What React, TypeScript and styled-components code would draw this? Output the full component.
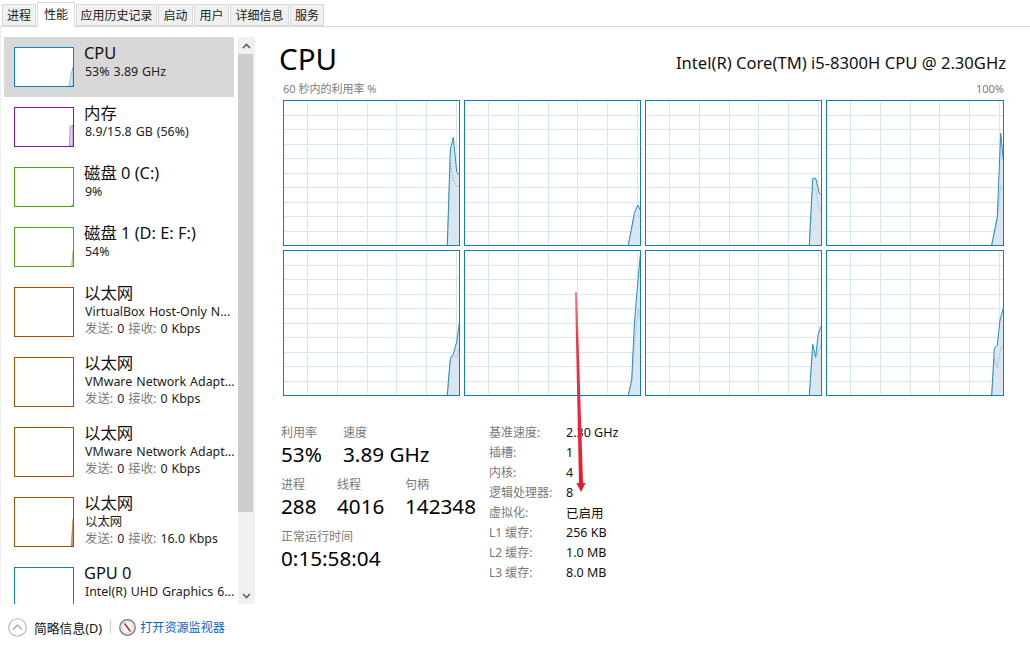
import { Fragment } from "react";
import styled, { createGlobalStyle } from "styled-components";

const GlobalStyle = createGlobalStyle`
  html, body {
    margin: 0;
    padding: 0;
    background: #fff;
    overflow: hidden;
  }
  body {
    font-family: "Noto Sans", "Noto Sans CJK SC", sans-serif;
    color: #000;
  }
`;

const Page = styled.div`
  width: 1030px;
  height: 652px;
  position: relative;
  display: flex;
  flex-direction: column;
  overflow: hidden;
`;

const TabBar = styled.div`
  height: 27px;
  box-sizing: border-box;
  display: flex;
  align-items: flex-end;
  padding-left: 2px;
  border-bottom: 1px solid #d9d9d9;
`;

const Tab = styled.div<{ $width: number; $active?: boolean }>`
  width: ${(p) => p.$width}px;
  height: ${(p) => (p.$active ? 25 : 22)}px;
  box-sizing: border-box;
  margin-bottom: ${(p) => (p.$active ? -1 : 0)}px;
  margin-right: 1px;
  display: flex;
  align-items: center;
  justify-content: center;
  font-size: 12px;
  color: #1a1a1a;
  background: ${(p) => (p.$active ? "#fff" : "#f0f0f0")};
  border: 1px solid #d9d9d9;
  border-bottom: ${(p) => (p.$active ? "none" : "1px solid #d9d9d9")};
  padding-bottom: ${(p) => (p.$active ? 3 : 0)}px;
`;

const Body = styled.div`
  height: 577px;
  display: flex;
`;

const Sidebar = styled.div`
  width: 255px;
  box-sizing: border-box;
  padding: 10px 0 0 3px;
  display: flex;
  gap: 4px;
  border-left: 1px solid #f0f0f0;
`;

const List = styled.div`
  width: 230px;
  height: 567px;
  overflow: hidden;
`;

const Row = styled.div<{ $tall?: boolean; $selected?: boolean }>`
  height: ${(p) => (p.$tall ? 70 : 60)}px;
  box-sizing: border-box;
  padding: 10px 0 0 10px;
  display: flex;
  gap: 10px;
  background: ${(p) => (p.$selected ? "#d8d8d8" : "transparent")};
`;

const Thumb = styled.div<{ $color: string; $tall?: boolean }>`
  width: 60px;
  height: ${(p) => (p.$tall ? 50 : 40)}px;
  box-sizing: border-box;
  flex: none;
  background: #fff;
  border: 1px solid ${(p) => p.$color};
  line-height: 0;
`;

const RowText = styled.div`
  min-width: 0;
  display: flex;
  flex-direction: column;
  margin-top: -4px;
  flex: 1;
`;

const RowTitle = styled.div`
  font-size: 16.4px;
  line-height: 19px;
  height: 20px;
  color: #111;
  white-space: nowrap;
`;

const RowSub = styled.div`
  font-size: 12.4px;
  line-height: 17px;
  margin-left: 1px;
  word-spacing: 0.8px;
  color: #222;
  white-space: nowrap;
`;

const Muted = styled.span`
  color: #7a7a7a;
`;

const Scrollbar = styled.div`
  width: 17px;
  height: 567px;
  background: #f0f0f0;
  display: flex;
  flex-direction: column;
`;

const ScrollButton = styled.div`
  height: 17px;
  display: flex;
  align-items: center;
  justify-content: center;
  background: #f0f0f0;
  line-height: 0;
`;

const ScrollTrack = styled.div`
  flex: 1;
  padding-right: 2px;
`;

const ScrollThumb = styled.div`
  height: 458px;
  background: #cdcdcd;
`;

const Main = styled.div`
  flex: 1;
  min-width: 0;
  box-sizing: border-box;
  padding: 10px 26px 0 24px;
`;

const TitleRow = styled.div`
  display: flex;
  justify-content: space-between;
  align-items: flex-end;
  height: 44px;
  margin-right: -2px;
`;

const Title = styled.div`
  font-size: 29.5px;
  line-height: 44px;
  color: #000;
`;

const CpuName = styled.div`
  font-size: 16.6px;
  line-height: 24px;
  padding-bottom: 6px;
  color: #111;
`;

const GraphHead = styled.div`
  display: flex;
  justify-content: space-between;
  font-size: 11px;
  line-height: 16px;
  height: 19px;
  margin-left: 4px;
  color: #7b7b7b;
`;

const GraphGrid = styled.div`
  margin-left: 4px;
  display: grid;
  grid-template-columns: 177px 177px 177px 178px;
  grid-auto-rows: 146px;
  gap: 4px;
`;

const GraphCell = styled.div`
  box-sizing: border-box;
  border: 1px solid #117dbb;
  background: #fff;
  line-height: 0;
  overflow: hidden;
`;

const Stats = styled.div`
  margin-top: 29px;
  display: flex;
`;

const LeftStats = styled.div`
  width: 208px;
  margin-left: 2px;
  display: flex;
  flex-direction: column;
  gap: 8px;
`;

const StatLine = styled.div`
  display: flex;
`;

const Stat = styled.div<{ $width: number }>`
  width: ${(p) => p.$width}px;
  flex: none;
  white-space: nowrap;
`;

const StatLabel = styled.div`
  font-size: 12px;
  line-height: 16px;
  color: #7a7a7a;
`;

const StatValue = styled.div`
  font-size: 20.7px;
  line-height: 26px;
  padding-bottom: 2px;
  color: #000;
`;

const Specs = styled.div`
  margin-top: -3px;
  display: grid;
  grid-template-columns: 77px auto;
  grid-auto-rows: 20px;
  align-items: center;
  font-size: 12px;
`;

const SpecLabel = styled.div`
  color: #7a7a7a;
`;

const SpecValue = styled.div`
  font-size: 12.5px;
  color: #111;
`;

const Footer = styled.div`
  flex: 1;
  display: flex;
  align-items: center;
  padding: 0 0 2px 8px;
  font-size: 12px;
`;

const FooterLabel = styled.div`
  margin-left: 7px;
  font-size: 12.8px;
  color: #111;
`;

const FooterDivider = styled.div`
  width: 1px;
  height: 14px;
  background: #d0d0d0;
  margin: 0 8px 0 8px;
`;

const FooterLink = styled.a`
  margin-left: 4px;
  font-size: 12.1px;
  color: #0066cc;
`;

const ArrowLayer = styled.svg`
  position: absolute;
  left: 560px;
  top: 285px;
  pointer-events: none;
`;

type Pt = [number, number];

const COL_LINES = [24, 54, 84, 113, 143, 173];
const ROW_LINES = [15, 29, 44, 58, 73, 87, 102, 116, 131];

const graphs: { total: Pt[]; kernel: Pt[] }[] = [
  {
    total: [[164.3, 145], [167.3, 50], [170.3, 37.3], [173.7, 71.7], [176.3, 75]],
    kernel: [[164.3, 145], [167.3, 61.7], [170.3, 80], [173.7, 87.3], [176.3, 85]],
  },
  {
    total: [[164.3, 145], [170.3, 113.3], [173.7, 105], [176.3, 110]],
    kernel: [[164.3, 145], [170.3, 118], [173.7, 115], [176.3, 118]],
  },
  {
    total: [[164.3, 145], [167.7, 78.3], [170.7, 78.3], [174.3, 93.3], [176.7, 95]],
    kernel: [[164.3, 145], [167.7, 87], [170.7, 90], [174.3, 110], [176.7, 112]],
  },
  {
    total: [[165.7, 145], [171.3, 116.7], [174.7, 33.3], [177.3, 60]],
    kernel: [[165.7, 145], [171.3, 120], [174.7, 85], [177.3, 90]],
  },
  {
    total: [[164.3, 145], [167.3, 108.3], [170.3, 104.3], [173.7, 91.7], [176.3, 73.3]],
    kernel: [[164.3, 145], [167.3, 110], [170.3, 105], [173.7, 108], [176.3, 96.7]],
  },
  {
    total: [[164.3, 145], [167.7, 130], [170.3, 75], [172.7, 45], [176.3, 5]],
    kernel: [[164.3, 145], [167.7, 132], [170.3, 95], [174.3, 58.3], [176.3, 70]],
  },
  {
    total: [[164.3, 145], [167.7, 94.3], [170.7, 106.7], [173.3, 83.3], [176.7, 75]],
    kernel: [[164.3, 145], [167.7, 102], [170.7, 108], [173.3, 101.7], [176.7, 93.3]],
  },
  {
    total: [[165.7, 145], [168.3, 98.3], [171.3, 95], [174, 70], [177.3, 58.3]],
    kernel: [[165.7, 145], [168.3, 108.3], [171.3, 118.3], [174.7, 98.3], [177.3, 95]],
  },
];

const toPoints = (pts: Pt[]) => pts.map((p) => p.join(",")).join(" ");

function CoreGraph({ total, kernel }: { total: Pt[]; kernel: Pt[] }) {
  const lastX = total[total.length - 1][0];
  const area = [...total, [lastX, 145] as Pt];
  return (
    <GraphCell>
      <svg width="176" height="144" viewBox="1 1 176 144">
        {COL_LINES.map((x) => (
          <line key={x} x1={x + 0.5} x2={x + 0.5} y1="0" y2="146" stroke="#d5e7f2" />
        ))}
        {ROW_LINES.map((y) => (
          <line key={y} x1="0" x2="178" y1={y + 0.5} y2={y + 0.5} stroke="#d5e7f2" />
        ))}
        <polygon points={toPoints(area)} fill="#d9e6f0" />
        <polyline points={toPoints(kernel)} fill="none" stroke="#9cc3dc" strokeWidth="1" strokeDasharray="2 1" />
        <polyline points={toPoints(total)} fill="none" stroke="#2a8bc4" strokeWidth="1" />
      </svg>
    </GraphCell>
  );
}

type Device = {
  color: string;
  title: string;
  sub: string;
  rates?: string;
  selected?: boolean;
  tall?: boolean;
  fill?: string;
  spark?: Pt[];
};

const devices: Device[] = [
  { color: "#117dbb", title: "CPU", sub: "53%  3.89 GHz", selected: true, fill: "#d9e6f0", spark: [[54, 38], [56, 26], [58, 19], [58, 38]] },
  { color: "#8b12ae", title: "内存", sub: "8.9/15.8 GB (56%)", fill: "#e4cdeb", spark: [[54.5, 38], [55, 19], [58, 17], [58, 38]] },
  { color: "#4da60c", title: "磁盘 0 (C:)", sub: "9%", fill: "#dbedce", spark: [[56, 38], [58, 36], [58, 38]] },
  { color: "#4da60c", title: "磁盘 1 (D: E: F:)", sub: "54%", fill: "#dbedce", spark: [[56.5, 38], [58, 23], [58, 38]] },
  { color: "#a74f01", title: "以太网", sub: "VirtualBox Host-Only N...", rates: "0 Kbps", tall: true },
  { color: "#a74f01", title: "以太网", sub: "VMware Network Adapt...", rates: "0 Kbps", tall: true },
  { color: "#a74f01", title: "以太网", sub: "VMware Network Adapt...", rates: "0 Kbps", tall: true },
  { color: "#a74f01", title: "以太网", sub: "以太网", rates: "16.0 Kbps", tall: true, fill: "#d9a878", spark: [[56, 48], [58, 21], [58, 48]] },
  { color: "#117dbb", title: "GPU 0", sub: "Intel(R) UHD Graphics 6...", tall: true },
];

const tabs = [
  { label: "进程", width: 34 },
  { label: "性能", width: 38, active: true },
  { label: "应用历史记录", width: 81 },
  { label: "启动", width: 35 },
  { label: "用户", width: 35 },
  { label: "详细信息", width: 59 },
  { label: "服务", width: 34 },
];

const specs = [
  ["基准速度:", "2.30 GHz"],
  ["插槽:", "1"],
  ["内核:", "4"],
  ["逻辑处理器:", "8"],
  ["虚拟化:", "已启用"],
  ["L1 缓存:", "256 KB"],
  ["L2 缓存:", "1.0 MB"],
  ["L3 缓存:", "8.0 MB"],
];

function Chevron({ up }: { up?: boolean }) {
  return (
    <svg width="9" height="6" viewBox="0 0 9 6">
      <path d={up ? "M1 5 L4.5 1.5 L8 5" : "M1 1 L4.5 4.5 L8 1"} fill="none" stroke="#606060" strokeWidth="1.6" />
    </svg>
  );
}

export default function App() {
  return (
    <Page>
      <GlobalStyle />
      <TabBar>
        {tabs.map((t) => (
          <Tab key={t.label} $width={t.width} $active={t.active}>
            {t.label}
          </Tab>
        ))}
      </TabBar>
      <Body>
        <Sidebar>
          <List>
            {devices.map((d, i) => (
              <Row key={i} $tall={d.tall} $selected={d.selected}>
                <Thumb $color={d.color} $tall={d.tall}>
                  {d.spark && (
                    <svg width="58" height={d.tall ? 48 : 38} viewBox={`0 0 58 ${d.tall ? 48 : 38}`}>
                      <polygon points={toPoints(d.spark)} fill={d.fill} stroke={d.color} strokeWidth="0.4" />
                    </svg>
                  )}
                </Thumb>
                <RowText>
                  <RowTitle>{d.title}</RowTitle>
                  <RowSub>{d.sub}</RowSub>
                  {d.rates && (
                    <RowSub>
                      <Muted>发送:</Muted> 0 <Muted>接收:</Muted> {d.rates}
                    </RowSub>
                  )}
                </RowText>
              </Row>
            ))}
          </List>
          <Scrollbar>
            <ScrollButton>
              <Chevron up />
            </ScrollButton>
            <ScrollTrack>
              <ScrollThumb />
            </ScrollTrack>
            <ScrollButton>
              <Chevron />
            </ScrollButton>
          </Scrollbar>
        </Sidebar>
        <Main>
          <TitleRow>
            <Title>CPU</Title>
            <CpuName>Intel(R) Core(TM) i5-8300H CPU @ 2.30GHz</CpuName>
          </TitleRow>
          <GraphHead>
            <span>60 秒内的利用率 %</span>
            <span>100%</span>
          </GraphHead>
          <GraphGrid>
            {graphs.map((g, i) => (
              <CoreGraph key={i} total={g.total} kernel={g.kernel} />
            ))}
          </GraphGrid>
          <Stats>
            <LeftStats>
              <StatLine>
                <Stat $width={62}>
                  <StatLabel>利用率</StatLabel>
                  <StatValue>53%</StatValue>
                </Stat>
                <Stat $width={120}>
                  <StatLabel>速度</StatLabel>
                  <StatValue>3.89 GHz</StatValue>
                </Stat>
              </StatLine>
              <StatLine>
                <Stat $width={56}>
                  <StatLabel>进程</StatLabel>
                  <StatValue>288</StatValue>
                </Stat>
                <Stat $width={68}>
                  <StatLabel>线程</StatLabel>
                  <StatValue>4016</StatValue>
                </Stat>
                <Stat $width={80}>
                  <StatLabel>句柄</StatLabel>
                  <StatValue>142348</StatValue>
                </Stat>
              </StatLine>
              <div>
                <StatLabel>正常运行时间</StatLabel>
                <StatValue>0:15:58:04</StatValue>
              </div>
            </LeftStats>
            <Specs>
              {specs.map(([k, v]) => (
                <Fragment key={k}>
                  <SpecLabel>{k}</SpecLabel>
                  <SpecValue>{v}</SpecValue>
                </Fragment>
              ))}
            </Specs>
          </Stats>
        </Main>
      </Body>
      <Footer>
        <svg width="19" height="19" viewBox="0 0 19 19">
          <circle cx="9.5" cy="9.5" r="8.8" fill="#fff" stroke="#b4b4b4" strokeWidth="1.1" />
          <path d="M5 11.5 L9.5 7 L14 11.5" fill="none" stroke="#a0a0a0" strokeWidth="1.2" />
        </svg>
        <FooterLabel>简略信息(D)</FooterLabel>
        <FooterDivider />
        <svg width="17" height="17" viewBox="0 0 17 17">
          <circle cx="8.5" cy="8.5" r="7.8" fill="#ececec" stroke="#777" strokeWidth="1.2" />
          <circle cx="8.5" cy="8.5" r="5.6" fill="#fbfbfb" stroke="#c4c4c4" strokeWidth="0.6" />
          <path d="M5.5 4.5 L11.5 12.5" stroke="#c8202a" strokeWidth="1.4" />
        </svg>
        <FooterLink>打开资源监视器</FooterLink>
      </Footer>
      <ArrowLayer width="30" height="215" viewBox="0 0 30 215">
        <defs>
          <linearGradient id="fade" x1="0" y1="0" x2="0" y2="1">
            <stop offset="0" stopColor="#f5808a" />
            <stop offset="0.25" stopColor="#ee3344" />
            <stop offset="1" stopColor="#e8192c" />
          </linearGradient>
        </defs>
        <polygon points="15,7 17,7 23,198 25.5,198 21,207 16.5,198 19,198" fill="url(#fade)" />
      </ArrowLayer>
    </Page>
  );
}
